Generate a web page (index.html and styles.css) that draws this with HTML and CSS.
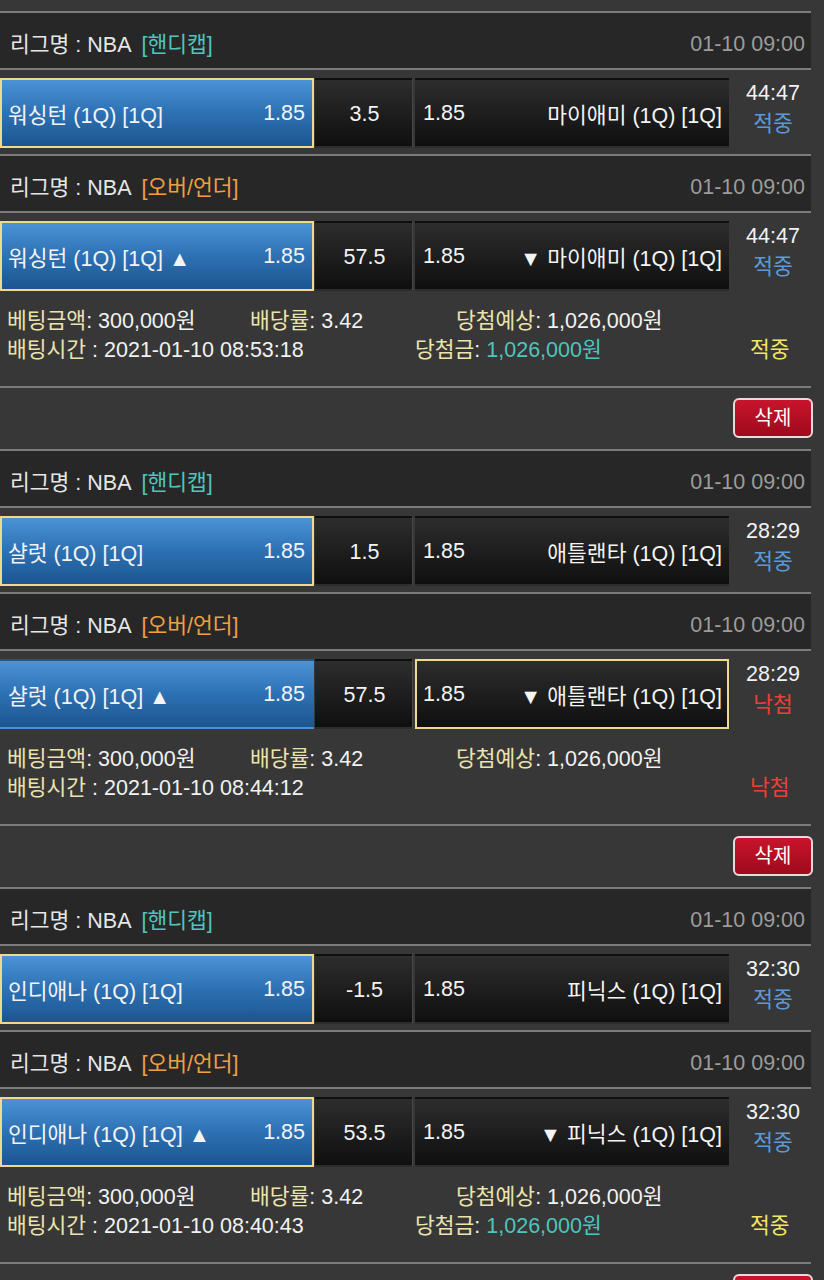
FILE: index.html
```html
<!DOCTYPE html>
<html lang="ko">
<head>
<meta charset="utf-8">
<title>베팅내역</title>
<link rel="stylesheet" href="styles.css">
</head>
<body>
<div class="page">
  <div class="actions actions-top"><button class="del">삭제</button></div>

  <section class="bet">
    <div class="game">
      <div class="league"><span class="lname">리그명 : NBA</span><span class="type hc">[핸디캡]</span><span class="date">01-10 09:00</span></div>
      <div class="match">
        <div class="cell home blue pick"><span>워싱턴 (1Q) [1Q]</span><span>1.85</span></div>
        <div class="cell mid">3.5</div>
        <div class="cell away"><span>1.85</span><span>마이애미 (1Q) [1Q]</span></div>
        <div class="status"><div class="timer">44:47</div><div class="res win">적중</div></div>
      </div>
    </div>
    <div class="game">
      <div class="league"><span class="lname">리그명 : NBA</span><span class="type ou">[오버/언더]</span><span class="date">01-10 09:00</span></div>
      <div class="match">
        <div class="cell home blue pick"><span>워싱턴 (1Q) [1Q] ▲</span><span>1.85</span></div>
        <div class="cell mid">57.5</div>
        <div class="cell away"><span>1.85</span><span>▼ 마이애미 (1Q) [1Q]</span></div>
        <div class="status"><div class="timer">44:47</div><div class="res win">적중</div></div>
      </div>
    </div>
    <div class="info">
      <div class="line">
        <span class="c1"><span class="lb">베팅금액</span>: 300,000원</span>
        <span class="c2"><span class="lb">배당률</span>: 3.42</span>
        <span class="c3"><span class="lb">당첨예상</span>: 1,026,000원</span>
      </div>
      <div class="line">
        <span class="d1"><span class="lb">배팅시간</span> : 2021-01-10 08:53:18</span>
        <span class="d2"><span class="lb">당첨금</span>: <span class="teal">1,026,000원</span></span>
        <span class="d3 yes">적중</span>
      </div>
    </div>
    <div class="actions"><button class="del">삭제</button></div>
  </section>

  <section class="bet">
    <div class="game">
      <div class="league"><span class="lname">리그명 : NBA</span><span class="type hc">[핸디캡]</span><span class="date">01-10 09:00</span></div>
      <div class="match">
        <div class="cell home blue pick"><span>샬럿 (1Q) [1Q]</span><span>1.85</span></div>
        <div class="cell mid">1.5</div>
        <div class="cell away"><span>1.85</span><span>애틀랜타 (1Q) [1Q]</span></div>
        <div class="status"><div class="timer">28:29</div><div class="res win">적중</div></div>
      </div>
    </div>
    <div class="game">
      <div class="league"><span class="lname">리그명 : NBA</span><span class="type ou">[오버/언더]</span><span class="date">01-10 09:00</span></div>
      <div class="match">
        <div class="cell home blue"><span>샬럿 (1Q) [1Q] ▲</span><span>1.85</span></div>
        <div class="cell mid">57.5</div>
        <div class="cell away pick"><span>1.85</span><span>▼ 애틀랜타 (1Q) [1Q]</span></div>
        <div class="status"><div class="timer">28:29</div><div class="res lose">낙첨</div></div>
      </div>
    </div>
    <div class="info">
      <div class="line">
        <span class="c1"><span class="lb">베팅금액</span>: 300,000원</span>
        <span class="c2"><span class="lb">배당률</span>: 3.42</span>
        <span class="c3"><span class="lb">당첨예상</span>: 1,026,000원</span>
      </div>
      <div class="line">
        <span class="d1"><span class="lb">배팅시간</span> : 2021-01-10 08:44:12</span>
        <span class="d2"></span>
        <span class="d3 no">낙첨</span>
      </div>
    </div>
    <div class="actions"><button class="del">삭제</button></div>
  </section>

  <section class="bet">
    <div class="game">
      <div class="league"><span class="lname">리그명 : NBA</span><span class="type hc">[핸디캡]</span><span class="date">01-10 09:00</span></div>
      <div class="match">
        <div class="cell home blue pick"><span>인디애나 (1Q) [1Q]</span><span>1.85</span></div>
        <div class="cell mid">-1.5</div>
        <div class="cell away"><span>1.85</span><span>피닉스 (1Q) [1Q]</span></div>
        <div class="status"><div class="timer">32:30</div><div class="res win">적중</div></div>
      </div>
    </div>
    <div class="game">
      <div class="league"><span class="lname">리그명 : NBA</span><span class="type ou">[오버/언더]</span><span class="date">01-10 09:00</span></div>
      <div class="match">
        <div class="cell home blue pick"><span>인디애나 (1Q) [1Q] ▲</span><span>1.85</span></div>
        <div class="cell mid">53.5</div>
        <div class="cell away"><span>1.85</span><span>▼ 피닉스 (1Q) [1Q]</span></div>
        <div class="status"><div class="timer">32:30</div><div class="res win">적중</div></div>
      </div>
    </div>
    <div class="info">
      <div class="line">
        <span class="c1"><span class="lb">베팅금액</span>: 300,000원</span>
        <span class="c2"><span class="lb">배당률</span>: 3.42</span>
        <span class="c3"><span class="lb">당첨예상</span>: 1,026,000원</span>
      </div>
      <div class="line">
        <span class="d1"><span class="lb">배팅시간</span> : 2021-01-10 08:40:43</span>
        <span class="d2"><span class="lb">당첨금</span>: <span class="teal">1,026,000원</span></span>
        <span class="d3 yes">적중</span>
      </div>
    </div>
    <div class="actions"><button class="del">삭제</button></div>
  </section>
</div>
</body>
</html>
```

FILE: styles.css
```css
* { box-sizing: border-box; }

html, body {
  margin: 0;
  padding: 0;
  background: #373737;
  overflow: hidden;
}

body {
  font-family: "Liberation Sans", "Noto Sans CJK KR", sans-serif;
  font-size: 21.5px;
  color: #f2f2f2;
}

.page {
  width: 824px;
  height: 1280px;
  overflow: hidden;
}

.bet {
  width: 811px;
}

.league {
  display: flex;
  align-items: center;
  height: 57px;
  border-top: 2px solid #7c7c7c;
  background: #272727;
  padding: 4px 6px 0 10px;
  color: #e6e6e6;
}

.type {
  margin-left: 10px;
}

.hc { color: #4ec5bd; }
.ou { color: #f0a042; }

.date {
  margin-left: auto;
  color: #9c9c9c;
  padding-top: 3px;
}

.match {
  display: flex;
  align-items: flex-start;
  border-top: 2px solid #7c7c7c;
  padding: 8px 0 6px;
}

.cell {
  height: 70px;
  display: flex;
  align-items: center;
  border: 2px solid transparent;
  background: linear-gradient(#2d2d2d, #0f0f0f);
  color: #f4f4f4;
}

.home {
  width: 314px;
  justify-content: space-between;
  padding: 0 7px 0 6px;
}

.mid {
  width: 98px;
  margin-left: 1px;
  justify-content: center;
  padding-top: 2px;
  border-right: 1px solid #474747;
}

.away {
  width: 314px;
  margin-left: 2px;
  justify-content: space-between;
  padding: 0 5px 0 6px;
}

.blue {
  background: linear-gradient(#4b93d6 0%, #2f74b7 45%, #1c5590 100%);
}

.pick {
  border-color: #eed98e;
}

.status {
  flex: 1;
  display: flex;
  flex-direction: column;
  align-items: center;
  padding-left: 6px;
  line-height: 31px;
}

.timer { color: #f2f2f2; }
.res.win { color: #5b9ad6; }
.res.lose { color: #ea4038; }

.info {
  padding: 10px 0 21px 7px;
  line-height: 29px;
}

.line {
  display: flex;
  white-space: nowrap;
}

.lb { color: #ebe3ae; }
.teal { color: #4ec5bd; }

.c1 { width: 243px; }
.c2 { width: 206px; }
.d1 { width: 408px; }
.d2 { width: 335px; }
.d3 { width: 50px; }
.yes { color: #f2e566; }
.no { color: #ea4038; }

.actions {
  width: 811px;
  height: 63px;
  border-top: 2px solid #7c7c7c;
  display: flex;
  justify-content: flex-end;
  align-items: flex-start;
  padding-top: 10px;
}

.actions-top {
  margin-top: -52px;
  border-top: none;
  height: 63px;
  padding-top: 12px;
}

.del {
  width: 80px;
  height: 40px;
  margin-right: -2px;
  border: 2px solid #e9d9dc;
  border-radius: 6px;
  background: linear-gradient(#c8142c, #9e0a1c);
  color: #ffffff;
  font-family: "Liberation Sans", "Noto Sans CJK KR", sans-serif;
  font-size: 20px;
  padding: 0;
  line-height: 34px;
}
```
